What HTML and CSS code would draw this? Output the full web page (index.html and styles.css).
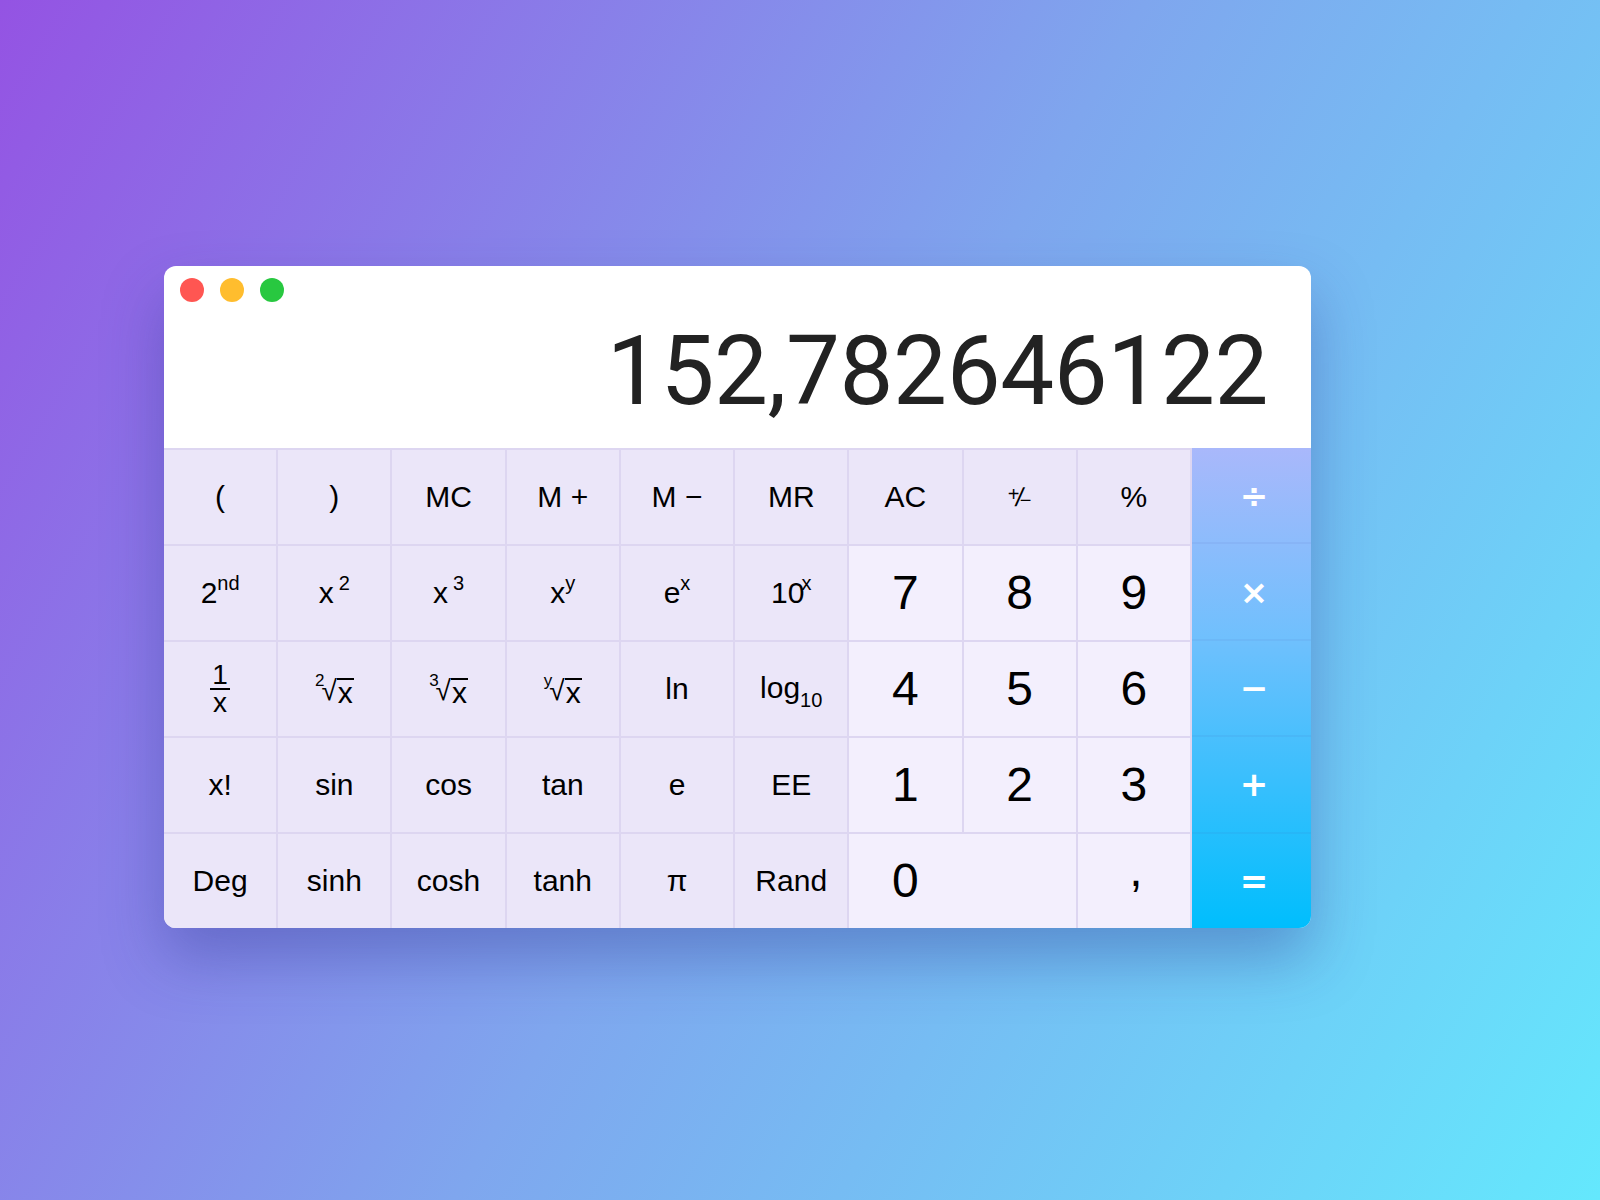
FILE: index.html
```html
<!DOCTYPE html>
<html lang="en">
<head>
  <meta charset="UTF-8" />
  <meta name="viewport" content="width=device-width, initial-scale=1.0"/>
  <title>Calculator</title>
  <link rel="stylesheet" href="styles.css">
</head>
<body>
  <div class="window">
    <div class="display">
      <div class="lights">
        <span class="light close"></span>
        <span class="light min"></span>
        <span class="light max"></span>
      </div>
      <div class="readout">152,782646122</div>
    </div>

    <div class="keypad">
      <div class="keys">
        <!-- row 1 -->
        <button class="key fn">(</button>
        <button class="key fn">)</button>
        <button class="key fn">MC</button>
        <button class="key fn">M +</button>
        <button class="key fn">M &minus;</button>
        <button class="key fn">MR</button>
        <button class="key fn">AC</button>
        <button class="key fn"><span class="pm"><sup>+</sup><span class="slash">/</span><sub>&minus;</sub></span></button>
        <button class="key fn">%</button>

        <!-- row 2 -->
        <button class="key fn"><span class="lbl">2<sup>nd</sup></span></button>
        <button class="key fn"><span class="lbl">x<sup class="wide">2</sup></span></button>
        <button class="key fn"><span class="lbl">x<sup class="wide">3</sup></span></button>
        <button class="key fn"><span class="lbl">x<sup>y</sup></span></button>
        <button class="key fn"><span class="lbl">e<sup>x</sup></span></button>
        <button class="key fn"><span class="lbl">10<sup class="tuck">x</sup></span></button>
        <button class="key num">7</button>
        <button class="key num">8</button>
        <button class="key num">9</button>

        <!-- row 3 -->
        <button class="key fn"><span class="frac"><span>1</span><span class="den">x</span></span></button>
        <button class="key fn"><span class="root"><sup class="idx">2</sup><span class="radical">&radic;</span><span class="radicand">x</span></span></button>
        <button class="key fn"><span class="root"><sup class="idx">3</sup><span class="radical">&radic;</span><span class="radicand">x</span></span></button>
        <button class="key fn"><span class="root"><sup class="idx">y</sup><span class="radical">&radic;</span><span class="radicand">x</span></span></button>
        <button class="key fn">ln</button>
        <button class="key fn"><span class="lbl low">log<sub>10</sub></span></button>
        <button class="key num">4</button>
        <button class="key num">5</button>
        <button class="key num">6</button>

        <!-- row 4 -->
        <button class="key fn">x!</button>
        <button class="key fn">sin</button>
        <button class="key fn">cos</button>
        <button class="key fn">tan</button>
        <button class="key fn">e</button>
        <button class="key fn">EE</button>
        <button class="key num">1</button>
        <button class="key num">2</button>
        <button class="key num">3</button>

        <!-- row 5 -->
        <button class="key fn">Deg</button>
        <button class="key fn">sinh</button>
        <button class="key fn">cosh</button>
        <button class="key fn">tanh</button>
        <button class="key fn">&pi;</button>
        <button class="key fn">Rand</button>
        <button class="key num zero">0</button>
        <button class="key num comma">,</button>
      </div>

      <div class="ops">
        <button class="key op">&divide;</button>
        <button class="key op">&times;</button>
        <button class="key op">&minus;</button>
        <button class="key op">+</button>
        <button class="key op">=</button>
      </div>
    </div>
  </div>
</body>
</html>
```

FILE: styles.css
```css
html, body {
  height: 100%;
}
body {
  margin: 0;
  box-sizing: border-box;
  padding: 266px 0 0 164px;
  background: linear-gradient(120deg, #9453e3 0%, #7fa6ee 50%, #64e8fd 100%);
  font-family: "Liberation Sans", Arial, sans-serif;
}
.window {
  width: 1147px;
  background: #fff;
  border-radius: 12px;
  overflow: hidden;
  box-shadow: 0 30px 60px rgba(40, 50, 140, 0.35);
}

/* top part: traffic lights + number */
.display {
  height: 182px;
  box-sizing: border-box;
  padding: 12px 43px 29px 16px;
  display: flex;
  flex-direction: column;
  justify-content: space-between;
}
.lights {
  display: flex;
  gap: 16px;
}
.light {
  width: 24px;
  height: 24px;
  border-radius: 50%;
}
.light.close { background: #ff5652; }
.light.min { background: #ffbd2e; }
.light.max { background: #28c840; }
.readout {
  text-align: right;
  font-family: Roboto, "Liberation Sans", sans-serif;
  font-size: 96px;
  line-height: 96px;
  letter-spacing: -0.4px;
  color: #222;
}

/* keys */
.keypad {
  display: flex;
  height: 480px;
}
.keys {
  flex: 1;
  display: grid;
  grid-template-columns: repeat(9, 1fr);
  grid-template-rows: repeat(5, 94px);
  gap: 2px;
  padding: 2px 2px 0 0;
  background: #ddd6f1;
}
.key {
  border: 0;
  margin: 0;
  padding: 0;
  font-family: inherit;
  color: #000;
  line-height: 1;
  display: flex;
  align-items: center;
  justify-content: center;
  cursor: pointer;
}
.key.fn {
  background: #ebe6f9;
  font-size: 30px;
}
.key.num {
  background: #f3effd;
  font-size: 48px;
}
.key.zero {
  grid-column: span 2;
  padding-right: calc(50% + 1px);
}
.key.comma {
  padding-bottom: 22px;
  padding-left: 4px;
}

/* labels with raised / lowered parts */
.lbl {
  display: inline-block;
  line-height: 1;
  margin-top: -6px;
}
.lbl.low {
  margin-top: 4px;
}
.lbl sup {
  font-size: 20px;
  vertical-align: 13px;
  line-height: 1;
}
.lbl sup.wide {
  margin-left: 5px;
}
.lbl sup.tuck {
  margin-left: -3px;
}
.lbl sub {
  font-size: 20px;
  vertical-align: -9px;
  line-height: 1;
}

/* plus-minus */
.pm {
  display: inline-flex;
  align-items: center;
}
.pm sup {
  font-size: 20px;
  vertical-align: 0;
  align-self: flex-start;
  margin-right: -4px;
}
.pm .slash {
  font-size: 26px;
  transform: skewX(-10deg);
}
.pm sub {
  font-size: 20px;
  vertical-align: 0;
  align-self: flex-end;
  margin-left: -3px;
}

/* 1/x */
.frac {
  display: inline-flex;
  flex-direction: column;
  align-items: center;
  font-size: 28px;
  line-height: 22px;
}
.frac .den {
  border-top: 2px solid #000;
  padding: 2px 3px 0;
  margin-top: 2px;
}

/* roots */
.root {
  display: inline-flex;
  align-items: flex-start;
  margin-top: 4px;
}
.root .idx {
  font-size: 17px;
  line-height: 17px;
  vertical-align: 0;
  margin-right: -3px;
  margin-top: -4px;
}
.root .radical {
  font-size: 28px;
  line-height: 30px;
}
.root .radicand {
  border-top: 2px solid #000;
  line-height: 26px;
  padding: 0 1px;
  margin-top: 2px;
}

/* operator column */
.ops {
  width: 119px;
  display: flex;
  flex-direction: column;
  background: linear-gradient(to bottom, #a9b8fb 0%, #6fc0fd 40%, #00befd 100%);
}
.key.op {
  flex: 1;
  background: transparent;
  color: #fff;
  font-family: "DejaVu Sans", sans-serif;
  font-weight: 700;
  font-size: 34px;
  padding-left: 5px;
  border-top: 2px solid rgba(70, 90, 170, 0.07);
}
.key.op:first-child {
  border-top: 0;
}
```
